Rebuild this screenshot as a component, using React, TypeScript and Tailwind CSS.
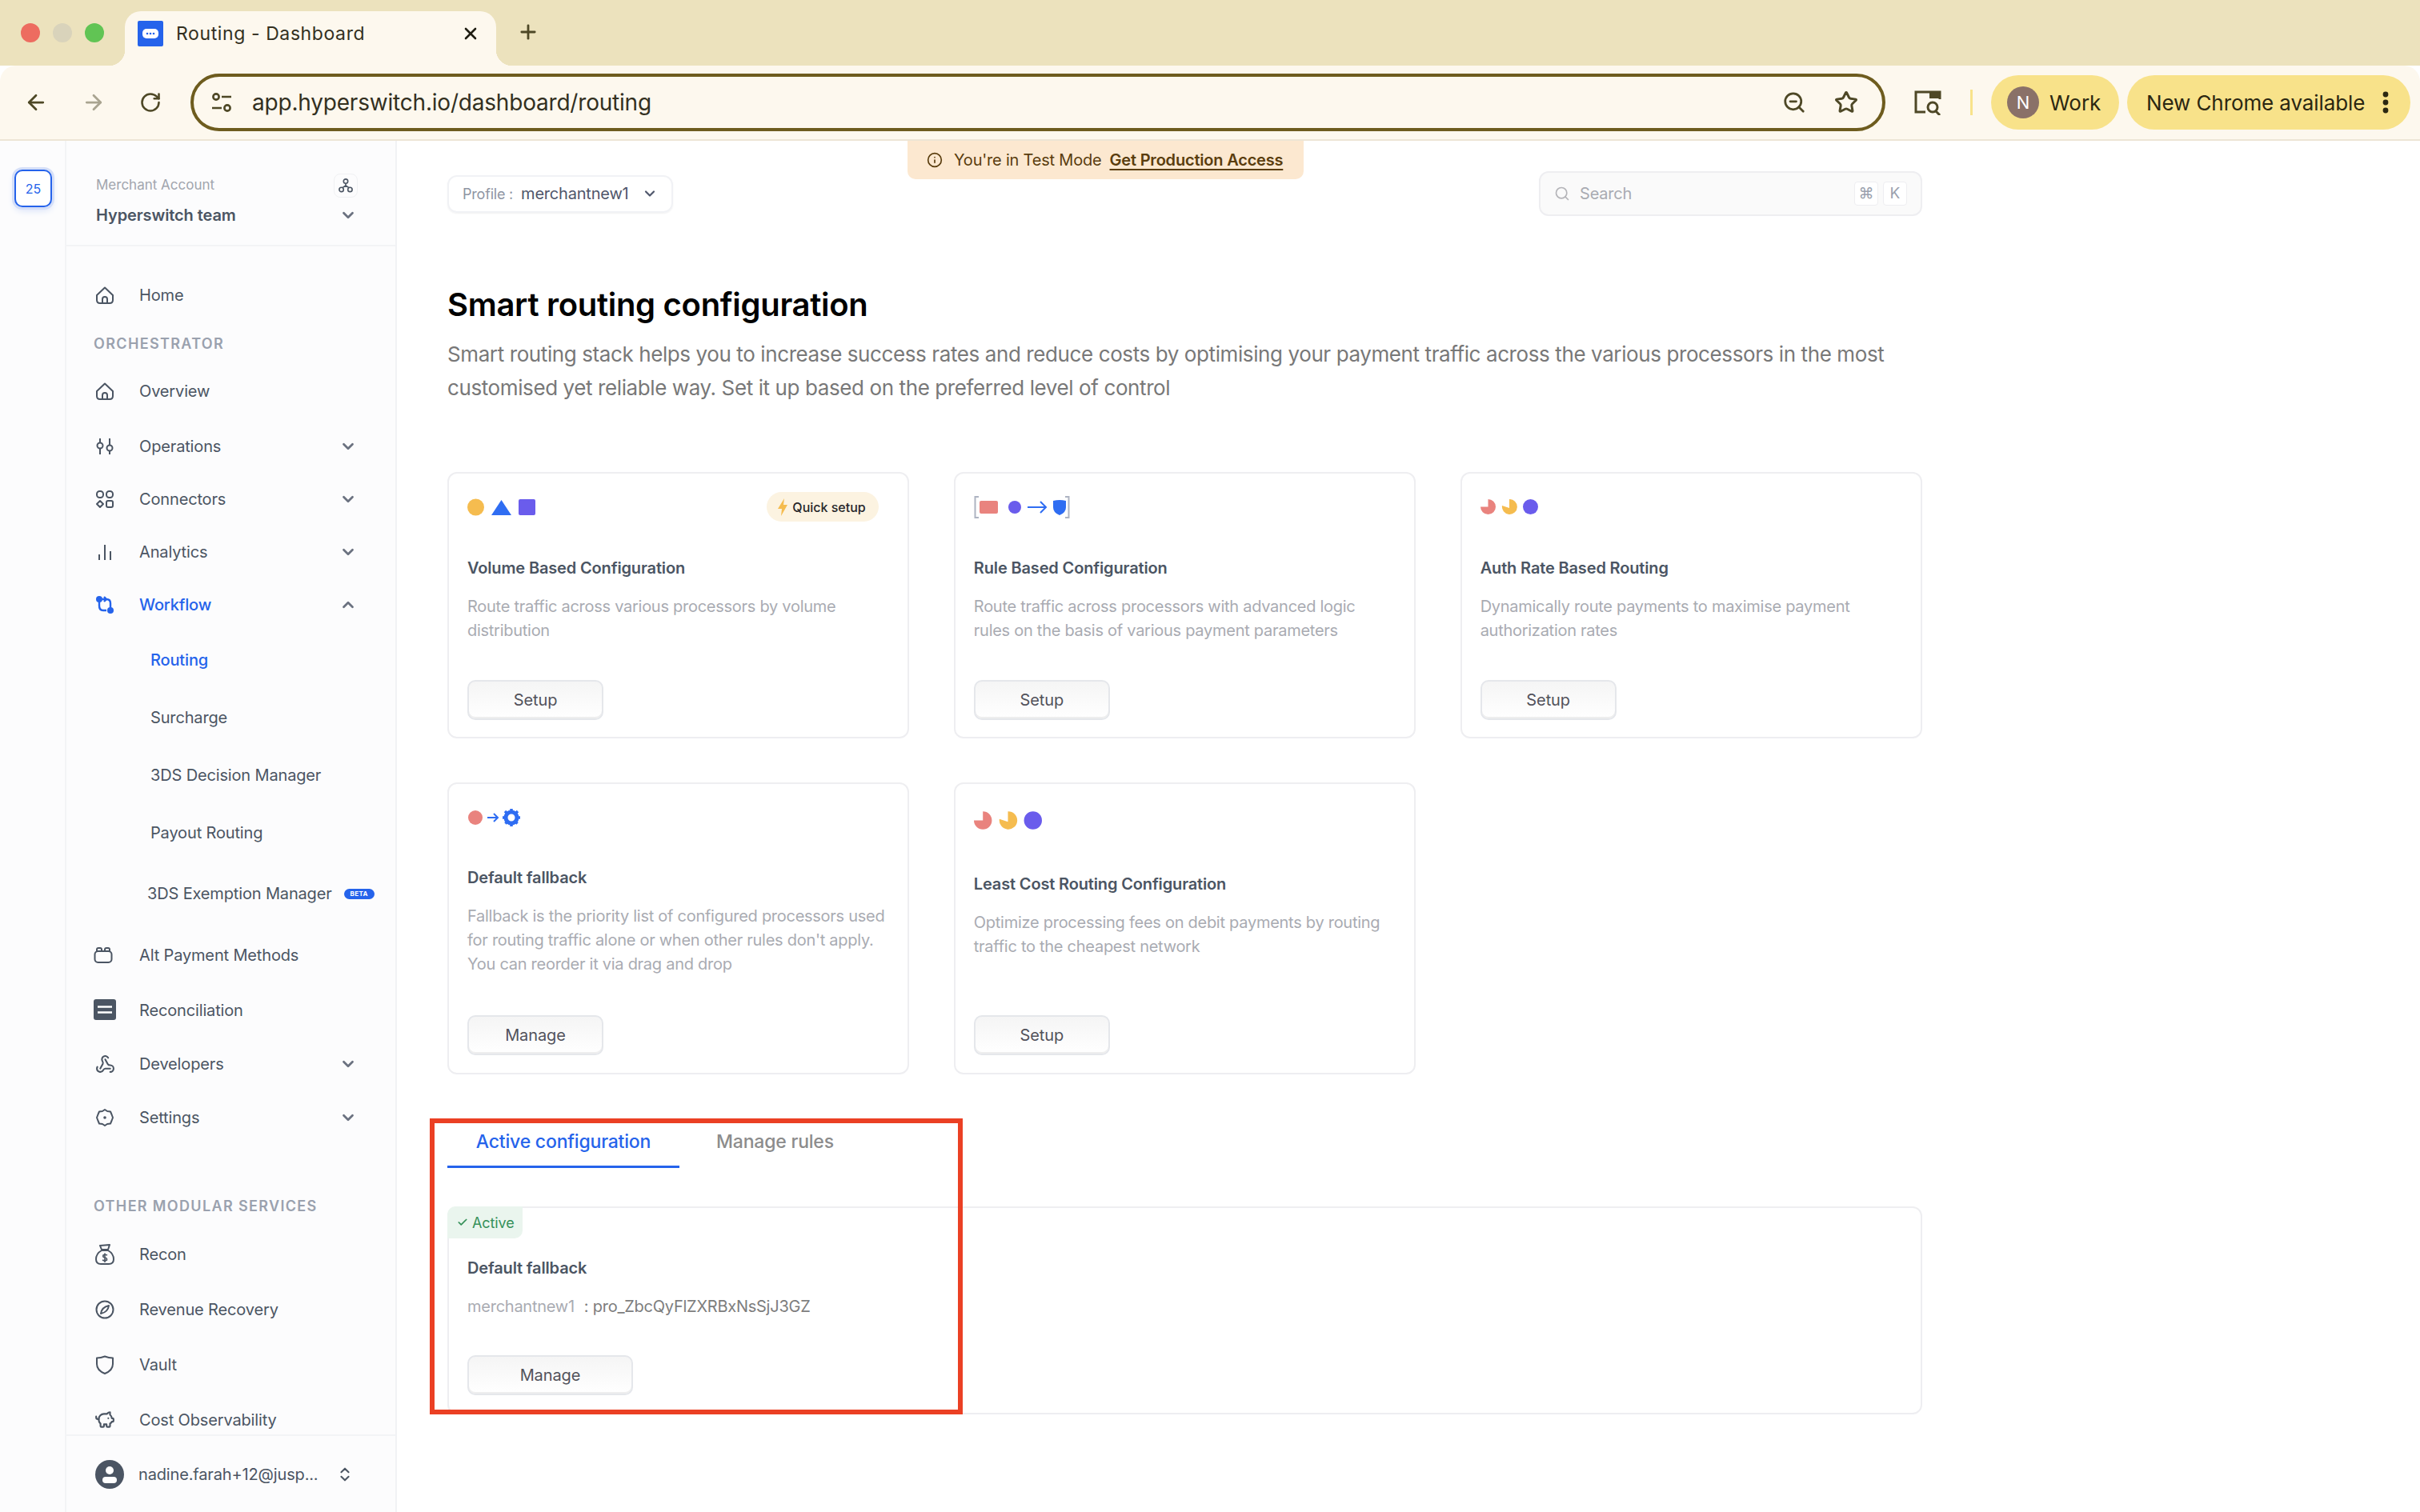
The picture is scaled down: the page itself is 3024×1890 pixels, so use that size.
import { ArrowLeft, ArrowRight, RotateCw, Star, ZoomOut, Plus, X, Search, ChevronDown, ChevronUp, ChevronsUpDown, Info, Check, Webhook, PiggyBank } from 'lucide-react'
import type { ReactNode } from 'react'

function HomeIcon() {
  return (
    <svg viewBox="0 0 24 24" className="w-[24px] h-[24px]" fill="none" stroke="#4b5563" strokeWidth="2">
      <path d="M2 12 L12 2.5 L22 12 V18 Q22 22 18 22 H6 Q2 22 2 18 Z" strokeLinejoin="round" />
      <path d="M9 22 V17 Q9 14 12 14 Q15 14 15 17 V22" />
    </svg>
  )
}

function OperationsIcon() {
  return (
    <svg viewBox="0 0 24 24" className="w-[24px] h-[24px]" fill="none" stroke="#4b5563" strokeWidth="2">
      <circle cx="6" cy="11" r="3.5" />
      <circle cx="18" cy="14" r="3.5" />
      <path d="M6 2 V7 M6 15 V22 M18 2 V10 M18 18 V22" />
    </svg>
  )
}

function ConnectorsIcon() {
  return (
    <svg viewBox="0 0 24 24" className="w-[24px] h-[24px]" fill="none" stroke="#4b5563" strokeWidth="2">
      <rect x="2" y="2" width="8" height="8" rx="3.5" />
      <rect x="14" y="2" width="8" height="8" rx="3.5" />
      <path d="M6 14 L10 18 L6 22 L2 18 Z" strokeLinejoin="round" />
      <rect x="14" y="14" width="8" height="8" rx="2" />
    </svg>
  )
}

function AnalyticsIcon() {
  return (
    <svg viewBox="0 0 24 24" className="w-[24px] h-[24px]" fill="none" stroke="#4b5563" strokeWidth="2">
      <path d="M5 22 V15 M12 22 V3 M19 22 V11" />
    </svg>
  )
}

function WorkflowIcon() {
  return (
    <svg viewBox="0 0 24 24" className="w-[24px] h-[24px]" fill="none" stroke="#2563eb" strokeWidth="2.4">
      <circle cx="5" cy="5" r="4" fill="#2563eb" stroke="none" />
      <circle cx="19" cy="19" r="4" fill="#2563eb" stroke="none" />
      <path d="M5 8 V13 Q5 19 10 19 H14 M11 2 L14 5 L11 8 M9 5 H14 Q19 5 19 10 V16" />
    </svg>
  )
}

function AltPayIcon() {
  return (
    <svg viewBox="0 0 24 24" className="w-[24px] h-[24px] -translate-x-[2px]" fill="none" stroke="#4b5563" strokeWidth="2">
      <rect x="1.5" y="7" width="21" height="14" rx="4" />
      <path d="M4 7 V5 Q4 3 6 3 H8 Q10 3 10 5 V7 M14 7 V5 Q14 3 16 3 H18 Q20 3 20 5 V7" />
    </svg>
  )
}

function ReconIcon() {
  return (
    <svg viewBox="0 0 28 28" className="w-[28px] h-[28px] shrink-0">
      <rect x="0" y="0" width="28" height="26" rx="3" fill="#4b5563" />
      <path d="M5 9.5 H23 M5 16.5 H23" stroke="#fff" strokeWidth="2.4" />
    </svg>
  )
}

function SettingsIcon() {
  return (
    <svg viewBox="0 0 24 24" className="w-[24px] h-[24px]" fill="none" stroke="#4b5563" strokeWidth="2">
      <path d="M12 2 L15 4 L19 4.5 L20.5 8 L22 12 L20.5 16 L19 19.5 L15 20 L12 22 L9 20 L5 19.5 L3.5 16 L2 12 L3.5 8 L5 4.5 L9 4 Z" strokeLinejoin="round" />
      <circle cx="12" cy="12" r="1.8" fill="#4b5563" stroke="none" />
    </svg>
  )
}

function MoneyBagIcon() {
  return (
    <svg viewBox="0 0 24 26" className="w-[24px] h-[26px] shrink-0" fill="none" stroke="#4b5563" strokeWidth="2">
      <path d="M8 7 L6 2 L18 1 L16 7 Z" strokeLinejoin="round" />
      <path d="M8 8 Q1 12 1 19 Q1 25 7 25 H17 Q23 25 23 19 Q23 12 16 8 Z" strokeLinejoin="round" />
      <path d="M15 14 Q12 12.5 10 14 Q9 16.5 12 17 Q15 17.5 14.5 20 Q12 21.5 9 20 M12 11.5 V23" strokeWidth="1.6" />
    </svg>
  )
}

function CompassIcon() {
  return (
    <svg viewBox="0 0 24 24" className="w-[24px] h-[24px]" fill="none" stroke="#4b5563" strokeWidth="2">
      <circle cx="12" cy="12" r="10.5" />
      <path d="M17 7 Q16 15 7 17 Q8 9 17 7 Z" strokeLinejoin="round" />
    </svg>
  )
}

function ShieldIcon() {
  return (
    <svg viewBox="0 0 24 24" className="w-[24px] h-[24px]" fill="none" stroke="#4b5563" strokeWidth="2">
      <path d="M12 1.5 Q17 3.5 22 3.5 V11 Q22 19 12 23 Q2 19 2 11 V3.5 Q7 3.5 12 1.5 Z" strokeLinejoin="round" />
    </svg>
  )
}

function Chevron({ up }: { up?: boolean }) {
  const Icon = up ? ChevronUp : ChevronDown
  return <Icon className="w-[22px] h-[22px] text-[#6b7280]" strokeWidth={3} />
}

function NavRow({ icon, label, chevron, active, className }: { icon: ReactNode; label: string; chevron?: boolean; active?: boolean; className: string }) {
  return (
    <div className={`flex items-center shrink-0 ${className}`}>
      <div className="w-[91px] pl-[31px] pr-[26px] flex justify-center shrink-0">{icon}</div>
      <span className={`text-[20px] leading-[30px] tracking-[-0.15px] ${active ? 'text-[#2563eb] font-medium' : 'text-[#4b5563]'}`}>{label}</span>
      {chevron && (
        <span className="ml-auto mr-[48px] flex">
          <Chevron up={active} />
        </span>
      )}
    </div>
  )
}

function SubRow({ label, active, className }: { label: string; active?: boolean; className: string }) {
  return (
    <div className={`flex items-center pl-[105px] shrink-0 ${className}`}>
      <span className={`text-[20px] leading-[30px] tracking-[-0.15px] ${active ? 'text-[#2563eb] font-medium' : 'text-[#4b5563]'}`}>{label}</span>
    </div>
  )
}

function Sidebar() {
  return (
    <aside className="w-[413px] shrink-0 flex flex-col bg-[#fcfcfd] border-r-2 border-[#f1f2f5]">
      <div className="h-[132px] shrink-0 border-b-2 border-[#f3f4f6] pl-[37px] pr-[48px] pt-[41px]">
        <div className="flex items-center justify-between h-[30px]">
          <span className="text-[17px] text-[#a1a5ad]">Merchant Account</span>
          <span className="w-[30px] h-[30px] -mr-[1px] rounded-[8px] border border-[#f0f1f3] flex items-center justify-center">
            <svg viewBox="0 0 20 20" className="w-[18px] h-[18px]" fill="none" stroke="#4b5563" strokeWidth="1.8">
              <circle cx="10" cy="4" r="3" />
              <circle cx="4" cy="15.5" r="3" />
              <circle cx="16" cy="15.5" r="3" />
              <path d="M10 7 V10 M10 10 L5.5 13 M10 10 L14.5 13" />
            </svg>
          </span>
        </div>
        <div className="flex items-center justify-between mt-[7px]">
          <span className="text-[20px] leading-[30px] font-semibold tracking-[-0.1px] text-[#4b5563]">Hyperswitch team</span>
          <Chevron />
        </div>
      </div>
      <div className="flex-1 min-h-0 flex flex-col overflow-hidden">
        <NavRow className="h-[60px] mt-[31px]" icon={<HomeIcon />} label="Home" />
        <div className="h-[60px] shrink-0 flex items-center pl-[34px] text-[18px] font-semibold tracking-[1.35px] text-[#9aa1ae]">ORCHESTRATOR</div>
        <NavRow className="h-[60px]" icon={<HomeIcon />} label="Overview" />
        <NavRow className="h-[66px] mt-[6px]" icon={<OperationsIcon />} label="Operations" chevron />
        <NavRow className="h-[66px]" icon={<ConnectorsIcon />} label="Connectors" chevron />
        <NavRow className="h-[66px]" icon={<AnalyticsIcon />} label="Analytics" chevron />
        <NavRow className="h-[66px]" icon={<WorkflowIcon />} label="Workflow" chevron active />
        <SubRow className="h-[72px]" label="Routing" active />
        <SubRow className="h-[72px]" label="Surcharge" />
        <SubRow className="h-[72px]" label="3DS Decision Manager" />
        <SubRow className="h-[72px]" label="Payout Routing" />
        <div className="h-[80px] shrink-0 flex items-center pl-[101px]">
          <span className="text-[20px] leading-[30px] tracking-[-0.15px] text-[#4b5563]">3DS Exemption Manager</span>
          <span className="ml-[15px] w-[38px] h-[13px] rounded-full bg-[#2563eb] text-white text-[8px] leading-[13px] font-bold text-center tracking-[0.4px]">BETA</span>
        </div>
        <NavRow className="h-[70px] mt-[2px]" icon={<AltPayIcon />} label="Alt Payment Methods" />
        <NavRow className="h-[70px] mt-[-1px]" icon={<ReconIcon />} label="Reconciliation" />
        <NavRow className="h-[68px] mt-[-2px]" icon={<Webhook className="w-[25px] h-[25px] text-[#4b5563]" strokeWidth={2} />} label="Developers" chevron />
        <NavRow className="h-[66px]" icon={<SettingsIcon />} label="Settings" chevron />
        <div className="h-[60px] mt-[47px] shrink-0 flex items-center pl-[34px] text-[18px] font-semibold tracking-[1.35px] text-[#9aa1ae]">OTHER MODULAR SERVICES</div>
        <NavRow className="h-[69px] mt-[-4px]" icon={<MoneyBagIcon />} label="Recon" />
        <NavRow className="h-[69px]" icon={<CompassIcon />} label="Revenue Recovery" />
        <NavRow className="h-[69px]" icon={<ShieldIcon />} label="Vault" />
        <NavRow className="h-[69px]" icon={<PiggyBank className="w-[26px] h-[26px] text-[#4b5563]" strokeWidth={2} />} label="Cost Observability" />
      </div>
      <div className="h-[97px] shrink-0 border-t-2 border-[#f3f4f6] flex items-center pl-[36px] pr-[52px]">
        <span className="w-[36px] h-[36px] rounded-full bg-[#4b5563] flex items-center justify-center shrink-0">
          <svg viewBox="0 0 36 36" className="w-[36px] h-[36px]" fill="#fff">
            <circle cx="18" cy="13" r="5" />
            <rect x="9" y="21" width="18" height="8" rx="4" />
          </svg>
        </span>
        <span className="ml-[18px] text-[20px] tracking-[-0.15px] text-[#4b5563] whitespace-nowrap">nadine.farah+12@jusp...</span>
        <ChevronsUpDown className="ml-auto w-[22px] h-[22px] text-[#4b5563]" strokeWidth={2.2} />
      </div>
    </aside>
  )
}

function SetupButton({ label, w }: { label: string; w: string }) {
  return (
    <button className={`h-[50px] ${w} rounded-[10px] border-2 border-[#e5e7eb] bg-gradient-to-b from-[#f5f5f5] to-white shadow-[inset_0_-2px_0_#eeeeee] text-[20px] tracking-[-0.1px] text-[#52525b]`}>
      {label}
    </button>
  )
}

function Card({ icon, title, desc, button, iconH, titleMt, pb, badge }: { icon: ReactNode; title: string; desc: string[]; button: string; iconH: string; titleMt: string; pb: string; badge?: boolean }) {
  return (
    <div className={`rounded-[12px] border-2 border-[#eeeef1] bg-white pl-[23px] pr-[20px] pt-[23px] flex flex-col ${pb}`}>
      <div className={`flex items-center justify-between ${iconH}`}>
        {icon}
        {badge && (
          <span className="h-[37px] w-[140px] mr-[16px] rounded-full bg-[#fcf3e1] flex items-center pl-[14px] text-[16px] font-medium text-[#27272a]">
            <svg viewBox="0 0 12 22" className="w-[12px] h-[22px] mr-[6px]" fill="#f5bc4f">
              <path d="M8 0 L0 13 H5 L4 22 L12 8 H7 Z" />
            </svg>
            Quick setup
          </span>
        )}
      </div>
      <div className={`${titleMt} text-[20px] leading-[30px] font-semibold tracking-[-0.15px] text-[#4b5563]`}>{title}</div>
      <div className="mt-[18px] text-[20px] leading-[30px] tracking-[-0.27px] text-[#a9abb2]">
        {desc.map((line) => (
          <div key={line} className="whitespace-nowrap">{line}</div>
        ))}
      </div>
      <div className="mt-auto">
        <SetupButton label={button} w="w-[170px]" />
      </div>
    </div>
  )
}

function ShapesIcon() {
  return (
    <svg viewBox="0 0 85 22" className="w-[85px] h-[22px]">
      <circle cx="10.5" cy="11" r="10.5" fill="#f5bc4f" />
      <path d="M42.5 2 L55 21 H30 Z" fill="#2f6df2" />
      <rect x="64" y="1" width="21" height="20" rx="2" fill="#6a5cec" />
    </svg>
  )
}

function RuleIcon() {
  return (
    <svg viewBox="0 0 120 28" className="w-[120px] h-[28px]" fill="none">
      <path d="M6 1 H1.5 V27 H6 M114 1 H118.5 V27 H114" stroke="#aeb4c2" strokeWidth="2" />
      <rect x="7" y="6" width="23" height="16" rx="2" fill="#e9837e" />
      <circle cx="51" cy="14" r="8" fill="#6a5cec" />
      <path d="M67 14 H90 M83 7 L90 14 L83 21" stroke="#2f6df2" strokeWidth="2" />
      <path d="M99 6 Q107 4 115 6 V14 Q115 21 107 24 Q99 21 99 14 Z" fill="#2f6df2" />
    </svg>
  )
}

function PiesIcon({ scale }: { scale: string }) {
  return (
    <svg viewBox="0 0 72 19" className={scale}>
      <path d="M9.5 0 A9.5 9.5 0 1 1 0 9.5 H9.5 Z" fill="#e9837e" />
      <path d="M36 0 A9.5 9.5 0 1 1 27 8 L36 11 Z" fill="#f5bc4f" />
      <circle cx="62.5" cy="9.5" r="9.5" fill="#6a5cec" />
    </svg>
  )
}

function FallbackIcon() {
  return (
    <svg viewBox="0 0 66 22" className="w-[66px] h-[22px]" fill="none">
      <circle cx="10" cy="11" r="9" fill="#e9837e" />
      <path d="M25 11 H38 M33 6 L38 11 L33 16" stroke="#2f6df2" strokeWidth="2" />
      <circle cx="55" cy="11" r="7" stroke="#2f6df2" strokeWidth="5" />
      <path d="M55 0 V22 M44 11 H66 M47 3 L63 19 M63 3 L47 19" stroke="#2f6df2" strokeWidth="3.5" strokeDasharray="3 16" />
    </svg>
  )
}

export default function App() {
  return (
    <div className="relative w-[3024px] h-[1890px] overflow-hidden bg-white flex flex-col" style={{ fontFamily: 'Inter, "Noto Sans", sans-serif' }}>
      {/* tab strip */}
      <div className="h-[82px] shrink-0 bg-[#ece2bd] flex items-end">
        <div className="w-[156px] shrink-0 flex items-center gap-[16px] pl-[26px] h-[68px] pb-[14px]">
          <span className="w-[24px] h-[24px] rounded-full bg-[#ed6c60]" />
          <span className="w-[24px] h-[24px] rounded-full bg-[#d9d3bb]" />
          <span className="w-[24px] h-[24px] rounded-full bg-[#61c454]" />
        </div>
        <div className="relative w-[464px] h-[68px] bg-[#fdf8ee] rounded-t-[20px] flex items-center pl-[16px] pr-[20px] pb-[12px]">
          <span className="absolute -left-[20px] bottom-0 w-[20px] h-[20px] bg-[radial-gradient(circle_at_0_0,#ece2bd_20px,#fdf8ee_20.5px)]" />
          <span className="absolute -right-[20px] bottom-0 w-[20px] h-[20px] bg-[radial-gradient(circle_at_100%_0,#ece2bd_20px,#fdf8ee_20.5px)]" />
          <span className="w-[32px] h-[32px] bg-[#2563eb] flex items-center justify-center rounded-[2px]">
            <svg viewBox="0 0 20 12" className="w-[20px] h-[12px]">
              <rect width="20" height="12" rx="5" fill="#fff" />
              <circle cx="6" cy="6" r="1.3" fill="#2563eb" />
              <circle cx="10" cy="6" r="1.3" fill="#2563eb" />
              <circle cx="14" cy="6" r="1.3" fill="#2563eb" />
            </svg>
          </span>
          <span className="ml-[16px] text-[23px] text-[#33301f] tracking-[0.6px]">Routing - Dashboard</span>
          <X className="ml-auto w-[24px] h-[24px] text-[#1f1d12]" strokeWidth={2.6} />
        </div>
        <Plus className="ml-[26px] mb-[28px] w-[28px] h-[28px] text-[#4e4826]" strokeWidth={2.4} />
      </div>

      {/* toolbar */}
      <div className="h-[94px] shrink-0 bg-[#fdf8ee] border-b-2 border-[#ede5d5] rounded-t-[20px] flex items-center pl-[30px] pr-[12px]">
        <ArrowLeft className="w-[30px] h-[30px] text-[#4e4826]" strokeWidth={2.2} />
        <ArrowRight className="ml-[42px] w-[30px] h-[30px] text-[#a9a490]" strokeWidth={2.2} />
        <RotateCw className="ml-[42px] w-[28px] h-[28px] text-[#4e4826]" strokeWidth={2.2} />
        <div className="ml-[36px] w-[2118px] h-[72px] rounded-full border-[4px] border-[#6e5c1e] flex items-center pl-[22px] pr-[30px]">
          <svg viewBox="0 0 26 26" className="w-[26px] h-[26px]" fill="none" stroke="#4e4826" strokeWidth="2.6">
            <circle cx="6" cy="6" r="3.6" />
            <path d="M13 6 H25 M1 20 H13" />
            <circle cx="20" cy="20" r="3.6" />
          </svg>
          <span className="ml-[25px] text-[28px] text-[#33301f] tracking-[-0.2px]">app.hyperswitch.io/dashboard/routing</span>
          <ZoomOut className="ml-auto w-[30px] h-[30px] text-[#4e4826]" strokeWidth={2.2} />
          <Star className="ml-[35px] w-[30px] h-[30px] text-[#4e4826]" strokeWidth={2.4} />
        </div>
        <svg viewBox="0 0 34 32" className="ml-[36px] w-[34px] h-[32px]" fill="none" stroke="#4e4826" strokeWidth="3">
          <path d="M14 28 H2 V3 H32 V12" />
          <path d="M19 2 H33 V11 H19 Z" fill="#4e4826" stroke="none" />
          <circle cx="23" cy="22" r="6" />
          <path d="M27 27 L32 32" />
        </svg>
        <span className="ml-[36px] w-[3px] h-[32px] bg-[#f8e38b]" />
        <div className="ml-[23px] w-[160px] h-[68px] rounded-full bg-[#f8e28a] flex items-center pl-[20px]">
          <span className="w-[40px] h-[40px] rounded-full bg-[#8a7168] text-white text-[22px] flex items-center justify-center">N</span>
          <span className="ml-[13px] text-[26px] text-[#2b2711]">Work</span>
        </div>
        <div className="ml-[10px] w-[354px] h-[68px] rounded-full bg-[#f8e28a] flex items-center pl-[24px]">
          <span className="text-[26px] tracking-[-0.1px] text-[#2b2711] whitespace-nowrap">New Chrome available</span>
          <svg viewBox="0 0 8 28" className="ml-[22px] w-[8px] h-[28px]" fill="#2b2711">
            <circle cx="4" cy="4" r="3.4" />
            <circle cx="4" cy="14" r="3.4" />
            <circle cx="4" cy="24" r="3.4" />
          </svg>
        </div>
      </div>

      {/* page */}
      <div className="flex-1 min-h-0 flex">
        <div className="w-[83px] shrink-0 bg-[#fcfcfd] border-r-2 border-[#f3f4f6] pl-[18px] pt-[36px]">
          <div className="w-[47px] h-[47px] rounded-[10px] border-2 border-[#2563eb] bg-white shadow-[0_0_0_3px_#d5dff8,0_4px_8px_#d5dff8] flex items-center justify-center text-[16px] text-[#2563eb]">25</div>
        </div>
        <Sidebar />

        <main className="relative flex-1 min-w-0 pl-[63px]">
          {/* test mode banner */}
          <div className="absolute left-[638px] top-0 w-[495px] h-[48px] rounded-b-[10px] bg-[#fce8d0] flex items-center pl-[24px] text-[20px] tracking-[-0.2px] text-[#5a3d0e] whitespace-nowrap">
            <Info className="w-[20px] h-[20px] mr-[14px] shrink-0" strokeWidth={2} />
            <span>You're in Test Mode</span>
            <span className="ml-[10px] font-semibold underline underline-offset-4">Get Production Access</span>
          </div>

          <div className="w-[1843px] pt-[38px]">
            <div className="flex items-center justify-between">
              <div className="w-[282px] h-[47px] rounded-[12px] border-2 border-[#f1f2f5] shadow-[0_1px_2px_#f1f1f1] flex items-center pl-[17px] whitespace-nowrap">
                <span className="text-[18px] tracking-[-0.2px] text-[#8f95a3]">Profile :</span>
                <span className="ml-[10px] text-[20px] tracking-[-0.2px] text-[#4f566b]">merchantnew1</span>
                <ChevronDown className="ml-[16px] w-[20px] h-[20px] text-[#4f566b]" strokeWidth={2.6} />
              </div>
              <div className="w-[479px] h-[56px] rounded-[12px] border-2 border-[#eeeef1] bg-[#fafafa] flex items-center pl-[17px] pr-[17px]">
                <Search className="w-[20px] h-[20px] text-[#b4b4b8]" strokeWidth={2} />
                <span className="ml-[12px] text-[20px] tracking-[-0.2px] text-[#a9abb2]">Search</span>
                <span className="ml-auto w-[30px] h-[30px] rounded-[4px] border border-[#eeeef1] bg-white flex items-center justify-center text-[19px] text-[#9aa1ae]">⌘</span>
                <span className="ml-[6px] w-[30px] h-[30px] rounded-[4px] border border-[#eeeef1] bg-white flex items-center justify-center text-[19px] text-[#9aa1ae]">K</span>
              </div>
            </div>

            <h1 className="mt-[87px] text-[40px] leading-[48px] font-semibold tracking-[-0.3px] text-black">Smart routing configuration</h1>
            <p className="mt-[17px] text-[26px] leading-[42px] tracking-[-0.4px] text-[#787878]">
              Smart routing stack helps you to increase success rates and reduce costs by optimising your payment traffic across the various processors in the most customised yet reliable way. Set it up based on the preferred level of control
            </p>

            <div className="mt-[84px] grid grid-cols-3 grid-rows-[333px_365px] gap-x-[55.5px] gap-y-[55px]">
              <Card icon={<ShapesIcon />} badge title="Volume Based Configuration" desc={['Route traffic across various processors by volume', 'distribution']} button="Setup" iconH="h-[37px]" titleMt="mt-[43px]" pb="pb-[21px]" />
              <Card icon={<RuleIcon />} title="Rule Based Configuration" desc={['Route traffic across processors with advanced logic', 'rules on the basis of various payment parameters']} button="Setup" iconH="h-[37px]" titleMt="mt-[43px]" pb="pb-[21px]" />
              <Card icon={<PiesIcon scale="w-[72px] h-[19px]" />} title="Auth Rate Based Routing" desc={['Dynamically route payments to maximise payment', 'authorization rates']} button="Setup" iconH="h-[37px]" titleMt="mt-[43px]" pb="pb-[21px]" />
              <Card icon={<FallbackIcon />} title="Default fallback" desc={['Fallback is the priority list of configured processors used', "for routing traffic alone or when other rules don't apply.", 'You can reorder it via drag and drop']} button="Manage" iconH="h-[37px]" titleMt="mt-[42px]" pb="pb-[22px]" />
              <Card icon={<PiesIcon scale="w-[85px] h-[23px]" />} title="Least Cost Routing Configuration" desc={['Optimize processing fees on debit payments by routing', 'traffic to the cheapest network']} button="Setup" iconH="h-[44px]" titleMt="mt-[43px]" pb="pb-[22px]" />
            </div>

            <div className="mt-[65px] flex">
              <div className="w-[290px] h-[52px] border-b-[3px] border-[#2563eb] text-center text-[23px] tracking-[-0.2px] leading-[38px] font-medium text-[#2563eb]">Active configuration</div>
              <div className="ml-[46px] text-[23px] tracking-[-0.2px] leading-[38px] font-medium text-[#8c8c8c]">Manage rules</div>
            </div>

            <div className="relative mt-[48px] h-[260px] rounded-[12px] border-2 border-[#eeeef1] pl-[23px] pt-[60px]">
              <div className="absolute -left-[2px] -top-[2px] w-[94px] h-[40px] rounded-tl-[10px] rounded-br-[10px] bg-[#eaf5ee] flex items-center pl-[12px] text-[18px] tracking-[-0.1px] text-[#36915a]">
                <Check className="w-[14px] h-[14px] mr-[5px]" strokeWidth={3} />
                Active
              </div>
              <div className="text-[20px] leading-[30px] font-semibold tracking-[-0.15px] text-[#4b5563]">Default fallback</div>
              <div className="mt-[18px] text-[20px] leading-[30px] tracking-[-0.25px] text-[#7d7d7d]">
                <span className="text-[#a9abb2]">merchantnew1</span>
                <span className="ml-[12px]">: pro_ZbcQyFlZXRBxNsSjJ3GZ</span>
              </div>
              <div className="mt-[46px]">
                <SetupButton label="Manage" w="w-[207px]" />
              </div>
            </div>
          </div>
        </main>
      </div>

      {/* screenshot annotation */}
      <div className="absolute left-[537px] top-[1398px] w-[666px] h-[370px] border-[6px] border-[#eb4024]" />
    </div>
  )
}
